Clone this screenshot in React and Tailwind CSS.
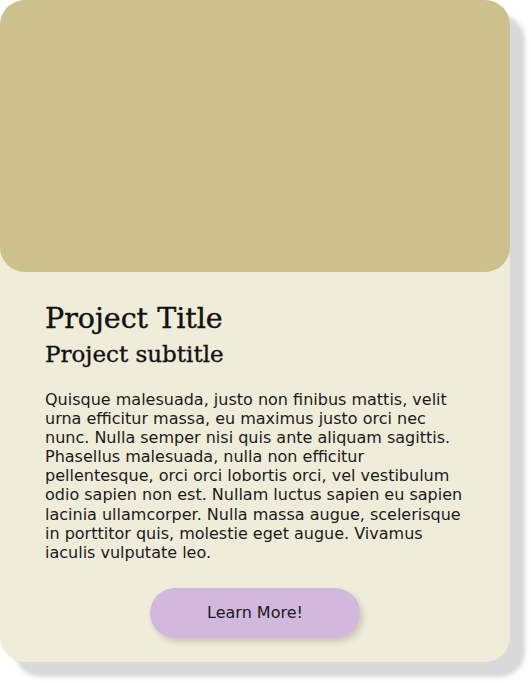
import React from 'react';

const lines = [
  'Quisque malesuada, justo non finibus mattis, velit',
  'urna efficitur massa, eu maximus justo orci nec',
  'nunc. Nulla semper nisi quis ante aliquam sagittis.',
  'Phasellus malesuada, nulla non efficitur',
  'pellentesque, orci orci lobortis orci, vel vestibulum',
  'odio sapien non est. Nullam luctus sapien eu sapien',
  'lacinia ullamcorper. Nulla massa augue, scelerisque',
  'in porttitor quis, molestie eget augue. Vivamus',
  'iaculis vulputate leo.',
];

export default function App() {
  return (
    <div className="w-[531px] h-[683px] bg-white">
      <div className="w-[510px] h-[662px] rounded-[25px] bg-[#f0ecda] shadow-[15px_15px_4px_#d9d9d9] flex flex-col">
        {/* Image placeholder */}
        <div className="h-[272px] rounded-[25px] bg-[#ccc18d]" />

        <div className="px-[45px] pt-[28px] flex flex-col">
          <h1 className="font-['DejaVu_Serif',serif] text-[28.5px] leading-[38px] text-[#111] [-webkit-text-stroke:0.4px_#111]">Project Title</h1>
          <h2 className="font-['DejaVu_Serif',serif] text-[23px] leading-[32px] text-[#111] [-webkit-text-stroke:0.35px_#111]">Project subtitle</h2>

          <p className="mt-[20px] font-['DejaVu_Sans',sans-serif] text-[16px] leading-[19.1px] text-[#1a1a1a]">
            {lines.map((l) => (
              <span key={l} className="block whitespace-nowrap">{l}</span>
            ))}
          </p>

          <div className="flex justify-center mt-[26px]">
            <button className="w-[210px] h-[50px] rounded-full bg-[#d3b8de] shadow-[3px_4px_6px_rgba(0,0,0,0.15)] font-['DejaVu_Sans',sans-serif] text-[16px] text-[#1a1a1a]">
              Learn More!
            </button>
          </div>
        </div>
      </div>
    </div>
  );
}
